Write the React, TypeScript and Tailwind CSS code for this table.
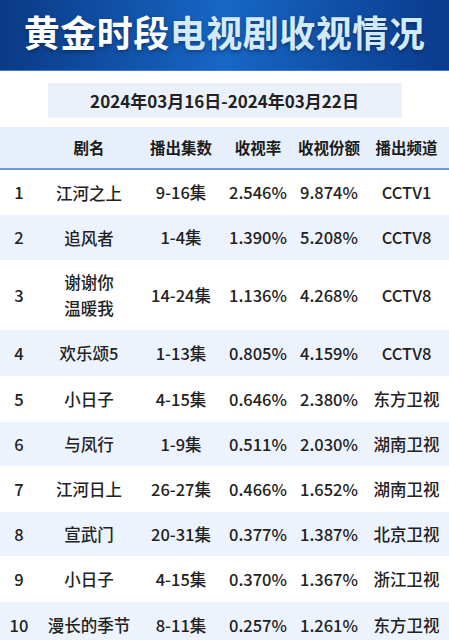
const rows = [
  { rank: "1", name: ["江河之上"], eps: "9-16集", rate: "2.546%", share: "9.874%", ch: "CCTV1", h: "h-[45px]" },
  { rank: "2", name: ["追风者"], eps: "1-4集", rate: "1.390%", share: "5.208%", ch: "CCTV8", h: "h-[45px]" },
  { rank: "3", name: ["谢谢你", "温暖我"], eps: "14-24集", rate: "1.136%", share: "4.268%", ch: "CCTV8", h: "h-[70px]" },
  { rank: "4", name: ["欢乐颂5"], eps: "1-13集", rate: "0.805%", share: "4.159%", ch: "CCTV8", h: "h-[46px]" },
  { rank: "5", name: ["小日子"], eps: "4-15集", rate: "0.646%", share: "2.380%", ch: "东方卫视", h: "h-[46px]" },
  { rank: "6", name: ["与凤行"], eps: "1-9集", rate: "0.511%", share: "2.030%", ch: "湖南卫视", h: "h-[44px]" },
  { rank: "7", name: ["江河日上"], eps: "26-27集", rate: "0.466%", share: "1.652%", ch: "湖南卫视", h: "h-[46px]" },
  { rank: "8", name: ["宣武门"], eps: "20-31集", rate: "0.377%", share: "1.387%", ch: "北京卫视", h: "h-[44px]" },
  { rank: "9", name: ["小日子"], eps: "4-15集", rate: "0.370%", share: "1.367%", ch: "浙江卫视", h: "h-[46px]" },
  { rank: "10", name: ["漫长的季节"], eps: "8-11集", rate: "0.257%", share: "1.261%", ch: "东方卫视", h: "h-[46px]" },
];

const cols = "grid grid-cols-[38px_102px_82px_72px_70px_1fr] items-center text-center";

export default function App() {
  return (
    <div className="h-[640px] w-[449px] overflow-hidden bg-white font-['Noto_Sans_CJK_SC','Noto_Sans',sans-serif] text-[#222]">
      {/* Title band */}
      <div className="flex h-[71px] items-center justify-center border-b border-[#3d7fd0] bg-gradient-to-r from-[#0b3a86] via-[#1767c6] to-[#0b3b8c] pb-[8px]">
        <h1 className="text-[36px] font-bold leading-none tracking-[0.5px] [text-shadow:0_2px_4px_rgba(0,0,0,0.35)]">
          <span className="text-white">黄金时段</span>
          <span className="text-[#d3eaf9]">电视剧收视情况</span>
        </h1>
      </div>

      {/* Date */}
      <div className="pt-[12px] pb-[9px]">
        <div className="mx-auto flex h-[35px] w-[354px] items-center justify-center bg-[#ebf1fa] text-[17px] font-bold">
          2024年03月16日-2024年03月22日
        </div>
      </div>

      {/* Table header */}
      <div className={`${cols} h-[43px] border-b-2 border-[#6d9bd6] bg-[#e7effa] text-[15.5px] font-bold text-[#1c1c1c]`}>
        <div />
        <div>剧名</div>
        <div>播出集数</div>
        <div>收视率</div>
        <div>收视份额</div>
        <div>播出频道</div>
      </div>

      {rows.map((r, i) => (
        <div
          key={r.rank}
          className={`${cols} ${r.h} text-[16.5px] font-medium ${i % 2 === 1 ? "bg-[#edf3fc]" : "bg-white"}`}
        >
          <div>{r.rank}</div>
          <div className="leading-[26px]">
            {r.name.map((n) => (
              <div key={n}>{n}</div>
            ))}
          </div>
          <div>{r.eps}</div>
          <div>{r.rate}</div>
          <div>{r.share}</div>
          <div>{r.ch}</div>
        </div>
      ))}
    </div>
  );
}
